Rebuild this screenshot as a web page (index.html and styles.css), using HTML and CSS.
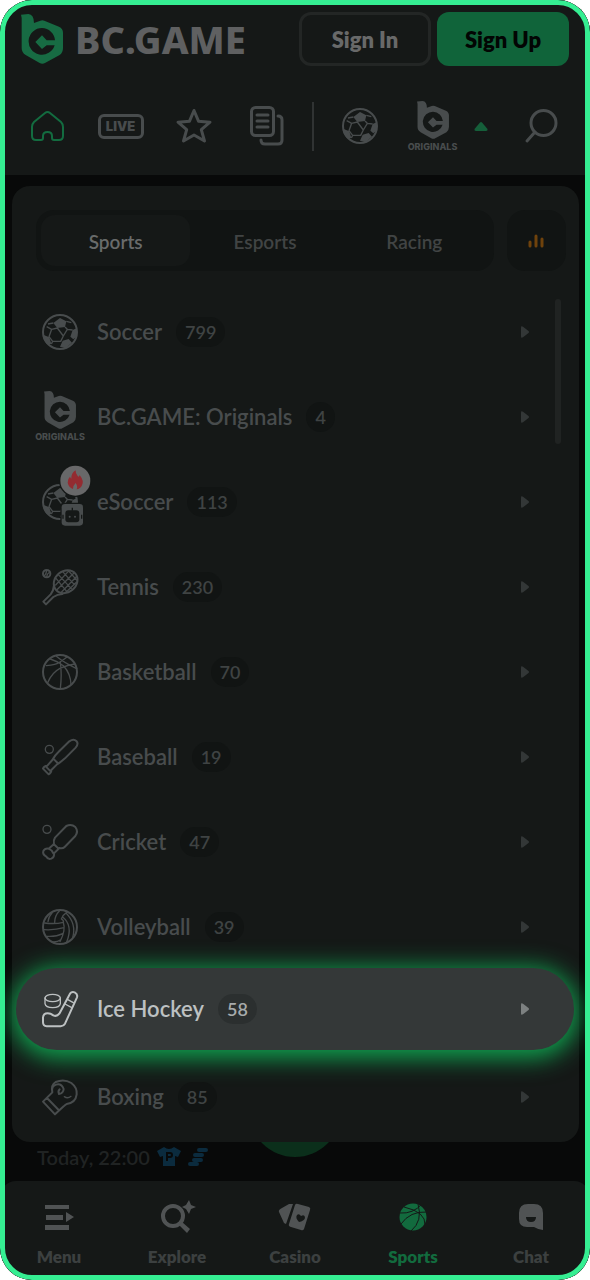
FILE: index.html
```html
<!DOCTYPE html>
<html lang="en">
<head>
<meta charset="utf-8">
<meta name="viewport" content="width=device-width, initial-scale=1">
<title>BC.GAME Sports</title>
<link rel="stylesheet" href="styles.css">
</head>
<body>
<svg class="defs" aria-hidden="true">
  <symbol id="bc" viewBox="64 40 126 150">
    <path fill-rule="evenodd" d="M64 42 86 40Q103 42 103 67L122 60Q128 58 134 60L178 78Q190 84 190 96V143Q190 156 180 163L136 187Q128 191 120 187L78 163Q66 156 66 143V52ZM127 82A40 40 0 1 0 165 134H141L127 145 107 124 127 104 141 119H166A40 40 0 0 0 127 82Z"/>
  </symbol>
  <symbol id="soccer" viewBox="0 0 108 108">
    <circle cx="54" cy="54" r="51" fill="none" stroke="currentColor" stroke-width="6"/>
    <path d="M54 12 73 22 69 39 46 42 34 27ZM3 62 22 70 28 90 14 90 5 76ZM62 80 80 75 90 86 70 103 54 98ZM92 48 105 42 105 66 94 76 85 68Z"/>
    <path fill="none" stroke="currentColor" stroke-width="4" stroke-linejoin="round" d="M46 42 29 46 21 68 32 82H56L64 66ZM34 27 18 30M73 22 88 26M69 39 76 46 92 48M76 46 64 66M29 46 14 38M32 82 28 90"/>
  </symbol>
  <symbol id="arrow" viewBox="0 0 8 12"><path d="M0 1.500Q0-.500 2 .700L7.500 5Q8.500 6 7.500 7L2 11.300Q0 12.500 0 10.500Z"/></symbol>
</svg>

<div class="screen">
  <header class="header">
    <div class="brand-row">
      <a class="brand" href="#"><svg class="brand-mark"><use href="#bc"/></svg><span>BC.GAME</span></a>
      <div class="auth">
        <button class="btn btn-outline" type="button">Sign In</button>
        <button class="btn btn-primary" type="button">Sign Up</button>
      </div>
    </div>
    <nav class="shortcuts" aria-label="Shortcuts">
      <a class="shortcut is-active" href="#" aria-label="Home"><svg width="36" height="32" viewBox="0 0 36 32" class="line home"><path d="M15 3 4 12Q2 14 2 17V26Q2 30 6 30H11Q13 30 13 28V26Q13 22 17.500 22T22 26V28Q22 30 24 30H29Q33 30 33 26V17Q33 14 31 12L20 3Q17.500 1 15 3Z"/></svg></a>
      <a class="shortcut" href="#" aria-label="Live"><span class="live">LIVE</span></a>
      <a class="shortcut" href="#" aria-label="Favourites"><svg width="36" height="36" viewBox="0 0 36 36" class="line"><path d="M18 2.500 22.500 13.200 34 14.200 25.300 21.700 28.500 33 18 27 7.500 33 10.700 21.700 2 14.200 13.500 13.200Z"/></svg></a>
      <a class="shortcut" href="#" aria-label="Bets"><svg width="34" height="40" viewBox="0 0 34 40" class="line"><rect x="1.500" y="1.500" width="22" height="28" rx="4"/><path d="M7 9H18M7 15H18M7 21H18M28 10Q32 10 32 14V34Q32 38 28 38H15Q11 38 11 34"/></svg></a>
      <span class="divider"></span>
      <a class="shortcut" href="#" aria-label="Soccer"><svg width="36" height="36"><use href="#soccer"/></svg></a>
      <a class="shortcut originals" href="#"><svg width="32" height="38"><use href="#bc"/></svg><span>ORIGINALS</span></a>
      <button class="collapse" type="button" aria-label="Collapse"><svg width="14" height="9" viewBox="0 0 14 9"><path d="M6 .500Q7-.500 8 .500L13.500 7Q14 9 12 9H2Q0 9 .500 7Z"/></svg></button>
      <a class="shortcut search" href="#" aria-label="Search"><svg width="34" height="36" viewBox="0 0 34 36" class="line"><circle cx="19.500" cy="15" r="12.500"/><path d="M11 24 3 33"/></svg></a>
    </nav>
  </header>

  <main class="panel">
    <div class="tabs-row">
      <div class="tabs" role="tablist">
        <button class="tab is-selected" type="button" role="tab" aria-selected="true">Sports</button>
        <button class="tab" type="button" role="tab">Esports</button>
        <button class="tab" type="button" role="tab">Racing</button>
      </div>
      <button class="stats" type="button" aria-label="Statistics"><svg width="18" height="16" viewBox="0 0 18 16"><path d="M2 9V13M8 3V13M14 6V13"/></svg></button>
    </div>
    <ul class="sports">
      <li><a class="sport" href="#"><span class="sport-icon"><svg><use href="#soccer"/></svg></span><span class="name">Soccer</span><span class="count">799</span><svg class="arrow"><use href="#arrow"/></svg></a></li>
      <li><a class="sport" href="#"><span class="sport-icon originals"><svg><use href="#bc"/></svg><span>ORIGINALS</span></span><span class="name">BC.GAME: Originals</span><span class="count">4</span><svg class="arrow"><use href="#arrow"/></svg></a></li>
      <li><a class="sport" href="#"><span class="sport-icon"><svg viewBox="0 0 108 108"><use href="#soccer" width="108" height="108"/><rect class="cut" x="55" y="56" width="72" height="73" rx="10"/><circle class="cut" cx="100" cy="-10" r="49"/><circle class="flame-bg" cx="100" cy="-10" r="45"/><path class="flame" d="M101-41Q100-31 107-24 111-19 113-27 127-9 120 4 115 15 104 16 108 7 101-3 94 3 93 15 80 10 77-4 76-15 84-22 86-17 88-16 87-33 101-41Z"/><rect x="59" y="60" width="64" height="65" rx="10"/><path class="robot" d="M91 71V80M63 92V104M119 92V104"/><rect class="robot-head" x="70" y="79" width="42" height="36" rx="9"/><circle cx="83" cy="98" r="3"/><circle cx="99" cy="98" r="3"/></svg></span><span class="name">eSoccer</span><span class="count">113</span><svg class="arrow"><use href="#arrow"/></svg></a></li>
      <li><a class="sport" href="#"><span class="sport-icon"><svg class="draw" viewBox="0 0 108 108"><circle cx="14" cy="14" r="11"/><path class="thin" d="M7 21Q13 16 14 4M14 24Q15 14 23 9"/><ellipse cx="71" cy="38" rx="38" ry="32" transform="rotate(-40 71 38)"/><path d="M36 49Q35 64 26 76L4 98 12 106 34 84Q46 76 61 75"/><path class="thin" d="M42 28 74 67M49 17 88 59M62 8 97 47M80 6 105 34M41 48 79 7M44 63 96 12M58 70 103 23M72 70 104 39"/></svg></span><span class="name">Tennis</span><span class="count">230</span><svg class="arrow"><use href="#arrow"/></svg></a></li>
      <li><a class="sport" href="#"><span class="sport-icon"><svg class="draw" viewBox="0 0 108 108"><circle cx="54" cy="54" r="51"/><path class="thin" d="M13 35Q42 33 54 24 66 16 75 9M25 15Q48 22 65 36 86 59 87 92M43 7Q67 27 104 44M17 86Q30 55 54 43 78 32 98 30M55 104Q60 60 55 24"/></svg></span><span class="name">Basketball</span><span class="count">70</span><svg class="arrow"><use href="#arrow"/></svg></a></li>
      <li><a class="sport" href="#"><span class="sport-icon"><svg class="draw" viewBox="0 0 108 108"><circle class="thin" cx="22" cy="31" r="12"/><path d="M82 7Q95-2 103 6T101 26L69 58Q53 72 45 76L28 93Q28 102 20 106L3 89Q6 80 16 80L31 63Q37 50 50 38ZM36 61 47 72M11 82 26 97"/></svg></span><span class="name">Baseball</span><span class="count">19</span><svg class="arrow"><use href="#arrow"/></svg></a></li>
      <li><a class="sport" href="#"><span class="sport-icon"><svg class="draw" viewBox="0 0 108 108"><circle class="thin" cx="15" cy="16" r="12"/><path d="M73 6Q88-1 100 9 110 22 100 36L68 69Q62 75 52 72L36 88Q38 99 28 104 18 108 12 97 1 91 4 81 9 72 20 74L36 60Q33 50 39 41ZM35 60 50 74M20 74Q30 78 34 88"/></svg></span><span class="name">Cricket</span><span class="count">47</span><svg class="arrow"><use href="#arrow"/></svg></a></li>
      <li><a class="sport" href="#"><span class="sport-icon"><svg class="draw" viewBox="0 0 108 108"><circle cx="54" cy="54" r="51"/><path class="thin" d="M8 42Q38 46 64 40 66 34 58 30 64 16 74 10M38 40Q38 20 52 6M18 38Q20 22 30 12M6 62Q38 64 66 56M14 82Q42 84 62 74M28 98Q46 100 56 92M64 40Q72 64 54 98M62 24Q94 50 74 99M72 12Q104 44 92 86"/></svg></span><span class="name">Volleyball</span><span class="count">39</span><svg class="arrow"><use href="#arrow"/></svg></a></li>
      <li><a class="sport is-highlighted" href="#"><span class="sport-icon"><svg class="draw" viewBox="0 0 108 108"><ellipse class="thin" cx="32" cy="21" rx="23" ry="11"/><path class="thin" d="M9 21V38Q11 50 32 50T55 38V21"/><path d="M84 8Q89 1 98 4 108 9 105 19L69 98Q65 105 56 106H14Q3 105 3 94V80Q4 67 17 67 26 67 34 73 44 78 52 68Z"/><path class="thin" d="M76 25 94 35M69 39 88 49"/></svg></span><span class="name">Ice Hockey</span><span class="count">58</span><svg class="arrow"><use href="#arrow"/></svg></a></li>
      <li><a class="sport" href="#"><span class="sport-icon"><svg class="draw" viewBox="0 0 108 108"><path d="M3 68 31 40Q26 18 41 9 66-2 88 12 106 26 104 46 101 71 74 75 68 79 65 82L39 106ZM15 57 50 93M31 40Q27 22 42 17 58 12 65 30 64 43 51 45 47 36 53 31"/><path class="thin" d="M67 53Q77 60 87 52"/></svg></span><span class="name">Boxing</span><span class="count">85</span><svg class="arrow"><use href="#arrow"/></svg></a></li>
    </ul>
    <span class="scroll-thumb"></span>
  </main>

  <section class="match">
    <span class="match-time">Today, 22:00</span>
    <svg width="24" height="20" viewBox="0 0 24 20"><path d="M7 0Q12 4 17 0L24 4 21 10 18 9V19H6V9L3 10 0 4Z"/><path class="jersey-letter" d="M10 14V6H13Q15 6 15 8T13 10H10"/></svg>
    <svg width="20" height="20" viewBox="0 0 20 20" class="stairs"><path d="M11 3H18M7 8H14M6 13H13M2 17H9"/></svg>
    <span class="fab"></span>
  </section>

  <nav class="bottom-nav" aria-label="Main">
    <a href="#"><svg viewBox="0 0 30 30"><path d="M1 3H25V7H1ZM2 13H19V18H2ZM1 23H25V28H1ZM22 10 30 15 22 20Z"/></svg>Menu</a>
    <a href="#"><svg viewBox="0 0 30 30"><circle cx="11" cy="14" r="10" fill="none" stroke="currentColor" stroke-width="4"/><path d="M20 20 28 27 25 31 17 23ZM27-2 29 3 34 5 29 7 27 12 24 7 20 5 24 3Z"/></svg>Explore</a>
    <a href="#"><svg viewBox="0 0 30 30"><path d="M2 6 9 2H13L6 22 4 21-1 10Q-2 8 2 6Z"/><path fill-rule="evenodd" d="M15 3Q16 1 18 2L29 5Q31 6 30 8L24 27Q23 29 21 28L11 25Q8 24 9 22ZM19 20Q15 16 17 13 19 11 21 14 25 12 25 16 24 19 19 20Z"/></svg>Casino</a>
    <a class="is-current" href="#"><svg viewBox="0 0 30 30"><circle cx="15" cy="15" r="13.500"/><path class="seams" d="M2 11Q15 12 24 2M6 5Q28 10 27 23M3 22Q12 9 29 10M13 29Q25 19 20 2"/></svg>Sports</a>
    <a href="#"><svg viewBox="0 0 30 30"><path fill-rule="evenodd" d="M12 2H18Q27 2 27 11V28Q23 28 18 25H11Q3 25 3 17V11Q3 2 12 2ZM10 15Q10 20 15 20T20 15Z"/></svg>Chat</a>
  </nav>
</div>
</body>
</html>
```

FILE: styles.css
```css
:root {
  --surface: #151817;
  --muted: #484c4d;
  --green: #10643a;
  --frame: #35ee92;
}

* { box-sizing: border-box; }

body {
  margin: 0;
  background: #fff;
  color: var(--muted);
  font-family: Lato, "Open Sans", sans-serif;
}

a { color: inherit; text-decoration: none; }

button {
  border: 0;
  padding: 0;
  background: none;
  color: inherit;
  font: inherit;
}

svg { display: block; fill: currentColor; flex: none; overflow: visible; }

.defs { position: absolute; width: 0; height: 0; }

.line { fill: none; stroke: currentColor; stroke-width: 3; stroke-linejoin: round; stroke-linecap: round; }
.home { stroke-width: 2; }

.screen {
  position: relative;
  display: flex;
  flex-direction: column;
  min-height: 100vh;
  overflow: hidden;
  border-radius: 32px;
  background: #080909;
}

.screen::after {
  content: "";
  position: absolute;
  inset: 0;
  border: 5px solid var(--frame);
  border-radius: 32px;
  pointer-events: none;
}

.header { padding-top: 12px; background: var(--surface); }

.brand-row {
  display: flex;
  align-items: center;
  justify-content: space-between;
  padding: 0 21px;
}

.brand {
  display: flex;
  align-items: center;
  gap: 12px;
  color: #5f6061;
  font: 800 38px/50px "Noto Sans", sans-serif;
}

.brand-mark { width: 42px; height: 50px; color: #176b43; }

.auth { display: flex; gap: 6px; }

.btn {
  width: 132px;
  height: 54px;
  border-radius: 12px;
  font-size: 22px;
  font-weight: 800;
}

.btn-outline { border: 3px solid #232625; color: #686969; }
.btn-primary { background: var(--green); color: #020503; }

.shortcuts {
  display: flex;
  align-items: center;
  height: 98px;
  margin-top: 11px;
  padding: 0 13px 0 11px;
}

.shortcut { display: flex; justify-content: center; flex: 0 0 73px; }
.shortcut.is-active { color: #136c40; }
.shortcut.search { margin-left: auto; }

.live {
  width: 46px;
  border: 3px solid;
  border-radius: 6px;
  font: 900 13px/19px Inter, sans-serif;
  text-align: center;
}

.divider { width: 2px; height: 49px; margin: 0 9px; background: #303333; }

.originals { flex-direction: column; align-items: center; gap: 3px; }
.originals span { font: 800 9px/10px Inter, sans-serif; }

.collapse { display: flex; justify-content: center; width: 24px; color: #155f3a; }

.panel {
  position: relative;
  margin: 11px 11px 0 12px;
  padding: 24px 0 3px;
  border-radius: 18px;
  background: var(--surface);
}

.tabs-row { display: flex; gap: 13px; padding: 0 13px 0 24px; }

.tabs {
  display: grid;
  grid-template-columns: repeat(3, 1fr);
  flex: 1;
  height: 61px;
  padding: 5px;
  border-radius: 18px;
  background: #111413;
}

.tab { padding-top: 2px; border-radius: 14px; font-size: 19px; font-weight: 600; color: #414444; }
.tab.is-selected { background: var(--surface); color: #696b6b; }

.stats {
  display: grid;
  place-items: center;
  width: 59px;
  height: 61px;
  border-radius: 18px;
  background: #111413;
}

.stats svg { fill: none; stroke: #6f420c; stroke-width: 3; stroke-linecap: round; }

.sports { margin: 18px 0 0; padding: 0 5px 0 4px; list-style: none; }

.sport {
  display: flex;
  align-items: center;
  height: 85px;
  padding: 0 45px 0 20px;
}

.sport-icon { display: flex; align-items: center; justify-content: center; width: 48px; }
.sport-icon svg { width: 36px; height: 36px; }
.sport-icon.originals svg { width: 32px; height: 38px; }

.name { margin-left: 13px; font-size: 22px; font-weight: 600; line-height: 30px; }

.count {
  min-width: 28px;
  margin-left: 14px;
  padding: 0 9px;
  border-radius: 15px;
  background: #111413;
  color: #3f4343;
  font-size: 18px;
  font-weight: 600;
  line-height: 30px;
  text-align: center;
}

.arrow { width: 8px; height: 12px; margin-left: auto; color: #333737; }

.draw { fill: none; stroke: currentColor; stroke-width: 6; stroke-linejoin: round; stroke-linecap: round; }
.thin { stroke-width: 4; }
.cut { fill: var(--surface); }
.flame-bg { fill: #686869; }
.flame { fill: #932b31; }
.robot { stroke: var(--surface); stroke-width: 4; }
.robot-head { fill: var(--surface); }

.sport.is-highlighted {
  height: 82px;
  margin: -1px 0 4px;
  border-radius: 41px;
  background: #343838;
  color: #bdc1c2;
  box-shadow: 0 4px 24px 4px #10a651;
}

.is-highlighted .count { background: #2b2f2f; color: #a7abac; }
.is-highlighted .arrow { color: #7d8181; }

.scroll-thumb {
  position: absolute;
  top: 113px;
  right: 18px;
  width: 6px;
  height: 145px;
  border-radius: 3px;
  background: #202322;
}

.match {
  position: relative;
  display: flex;
  align-items: center;
  gap: 7px;
  height: 39px;
  padding: 0 37px 9px;
  overflow: hidden;
  color: #0b2b3e;
}

.match-time { color: #202323; font-size: 20px; font-weight: 600; line-height: 30px; }
.jersey-letter { fill: none; stroke: #080909; stroke-width: 2; }
.stairs { stroke: currentColor; stroke-width: 4; stroke-linecap: round; }

.fab {
  position: absolute;
  left: 50%;
  bottom: 24px;
  width: 92px;
  height: 92px;
  margin-left: -46px;
  border-radius: 50%;
  background: #0b2f1b;
}

.bottom-nav {
  display: grid;
  grid-template-columns: repeat(5, 1fr);
  flex: 1;
  padding: 21px 0 8px;
  border-radius: 16px 16px 0 0;
  background: var(--surface);
  font-size: 17px;
  font-weight: 800;
  line-height: 24px;
}

.bottom-nav a { display: flex; flex-direction: column; align-items: center; gap: 13px; color: #3c4040; }
.bottom-nav svg { width: 30px; height: 30px; color: #505354; }
.bottom-nav .is-current, .bottom-nav .is-current svg { color: #126b3e; }
.seams { fill: none; stroke: var(--surface); stroke-width: 1; }
```
